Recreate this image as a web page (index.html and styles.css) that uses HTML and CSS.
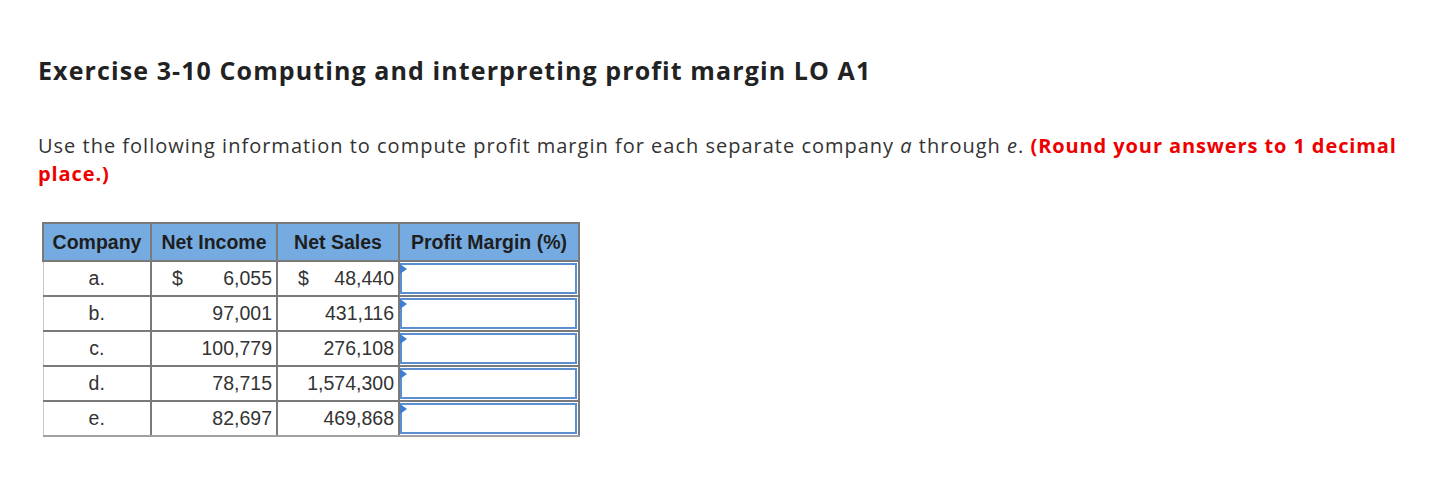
FILE: index.html
```html
<!DOCTYPE html>
<html>
<head>
<meta charset="utf-8">
<link rel="stylesheet" href="styles.css">
</head>
<body>
<div class="page">
  <h1 class="title">Exercise 3-10 Computing and interpreting profit margin LO A1</h1>
  <p class="intro">Use the following information to compute profit margin for each separate company <i>a</i> through <i>e</i>. <b class="red">(Round your answers to 1 decimal</b> <b class="red">place.)</b></p>
  <table class="grid">
    <thead>
      <tr>
        <th class="c1">Company</th>
        <th class="c2">Net Income</th>
        <th class="c3">Net Sales</th>
        <th class="c4">Profit Margin (%)</th>
      </tr>
    </thead>
    <tbody>
      <tr>
        <td class="co">a.</td>
        <td class="num"><span class="cur">$</span><span>6,055</span></td>
        <td class="num"><span class="cur">$</span><span>48,440</span></td>
        <td class="in"><div class="box"><span class="tri"></span></div></td>
      </tr>
      <tr>
        <td class="co">b.</td>
        <td class="num"><span></span><span>97,001</span></td>
        <td class="num"><span></span><span>431,116</span></td>
        <td class="in"><div class="box"><span class="tri"></span></div></td>
      </tr>
      <tr>
        <td class="co">c.</td>
        <td class="num"><span></span><span>100,779</span></td>
        <td class="num"><span></span><span>276,108</span></td>
        <td class="in"><div class="box"><span class="tri"></span></div></td>
      </tr>
      <tr>
        <td class="co">d.</td>
        <td class="num"><span></span><span>78,715</span></td>
        <td class="num"><span></span><span>1,574,300</span></td>
        <td class="in"><div class="box"><span class="tri"></span></div></td>
      </tr>
      <tr>
        <td class="co">e.</td>
        <td class="num"><span></span><span>82,697</span></td>
        <td class="num"><span></span><span>469,868</span></td>
        <td class="in"><div class="box"><span class="tri"></span></div></td>
      </tr>
    </tbody>
  </table>
</div>
</body>
</html>
```
FILE: styles.css
```css
html, body {
  margin: 0;
  padding: 0;
  background: #ffffff;
}
.page {
  padding: 53px 0 0 38px;
}
.title {
  margin: 0;
  font-family: "Open Sans", "Lato", sans-serif;
  font-weight: 700;
  font-size: 25px;
  letter-spacing: 1.1px;
  line-height: 34px;
  color: #222222;
}
.intro {
  margin: 45px 0 0 0;
  width: 1385px;
  font-family: "Open Sans", "Lato", sans-serif;
  font-size: 20px;
  letter-spacing: 1px;
  line-height: 28px;
  color: #333333;
}
.intro i {
  font-style: italic;
}
.red {
  color: #ee0000;
  font-weight: 700;
  letter-spacing: 0.9px;
}
.grid {
  margin: 34px 0 0 4px;
  border-collapse: collapse;
  font-family: "Liberation Sans", Arial, sans-serif;
  font-size: 19.5px;
  color: #333333;
}
.grid th {
  background: #76abe1;
  color: #1e1e1e;
  font-weight: 700;
  font-size: 19.5px;
  height: 36px;
  padding: 0 4px;
  border: 2px solid #7a7a7a;
  text-align: center;
}
.grid td {
  height: 33px;
  padding: 0;
  border: 2px solid #7a7a7a;
}
.grid tbody tr:last-child td {
  border-bottom-color: #a0a0a0;
}
.grid tbody td.co {
  border-left-color: #c8c8c8;
  border-left-width: 1px;
}
.c1 { width: 98px; }
.c2 { width: 116px; }
.c3 { width: 112px; }
.c4 { width: 170px; }
.co {
  text-align: center;
}
.num {
  text-align: right;
}
.num {
  padding: 0 4px 0 0 !important;
}
.num span.cur {
  float: left;
  padding-left: 20px;
}
.in {
  padding: 0 !important;
  vertical-align: top;
}
.box {
  position: relative;
  height: 27px;
  margin: 1px 1px 1px 0;
  border: 2px solid #5b8fd0;
  background: #ffffff;
}
.tri {
  position: absolute;
  left: -2px;
  top: -1px;
  width: 0;
  height: 0;
  border-top: 5px solid transparent;
  border-bottom: 5px solid transparent;
  border-left: 7px solid #3f7ed0;
}
```
